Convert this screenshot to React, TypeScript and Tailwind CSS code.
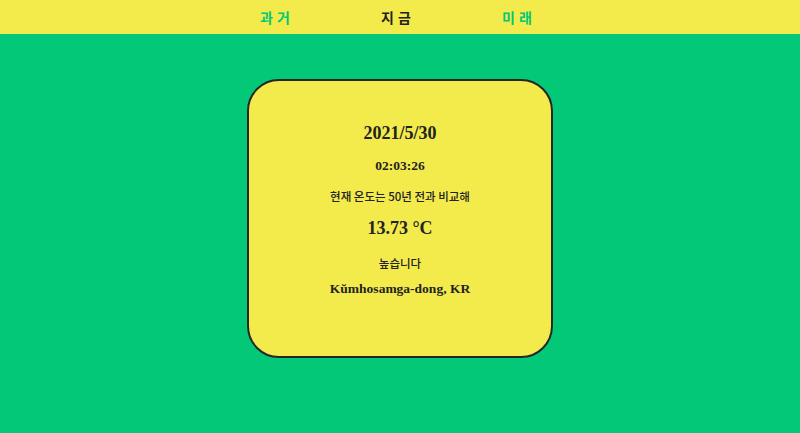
import React from 'react';

const navItems = [
  { label: '과거', active: false },
  { label: '지금', active: true },
  { label: '미래', active: false },
];

function App() {
  return (
    <div className="min-h-screen h-[433px] bg-[#02c878] flex flex-col font-['Noto_Sans_CJK_KR',sans-serif]">
      <header className="h-[34px] bg-[#f2eb4b] flex justify-center items-center shrink-0">
        <nav className="flex items-center pr-[4px]">
          {navItems.map((item) => (
            <span
              key={item.label}
              className={`w-[121px] text-center text-[14px] font-bold tracking-[0.3em] ${
                item.active ? 'text-[#222]' : 'text-[#02c878]'
              }`}
            >
              {item.label}
            </span>
          ))}
        </nav>
      </header>

      <main className="flex justify-center pt-[45px]">
        <div className="w-[306px] h-[279px] bg-[#f2eb4b] border-2 border-[#262626] rounded-[32px] flex flex-col items-center pt-[40px] text-[#222]">
          <p className="font-['Liberation_Serif',serif] font-bold text-[18px] leading-[24px]">2021/5/30</p>
          <p className="font-['Liberation_Serif',serif] font-bold text-[13.5px] leading-[18px] mt-[12px]">02:03:26</p>
          <p className="text-[11.5px] font-medium leading-[16px] mt-[13px]">현재 온도는 50년 전과 비교해</p>
          <p className="font-['Liberation_Serif',serif] font-bold text-[18px] leading-[24px] mt-[12px]">13.73 °C</p>
          <p className="text-[11.5px] font-medium leading-[16px] mt-[15px]">높습니다</p>
          <p className="font-['Liberation_Serif',serif] font-bold text-[13.5px] leading-[18px] mt-[9px]">Kŭmhosamga-dong, KR</p>
        </div>
      </main>
    </div>
  );
}

export default App;
